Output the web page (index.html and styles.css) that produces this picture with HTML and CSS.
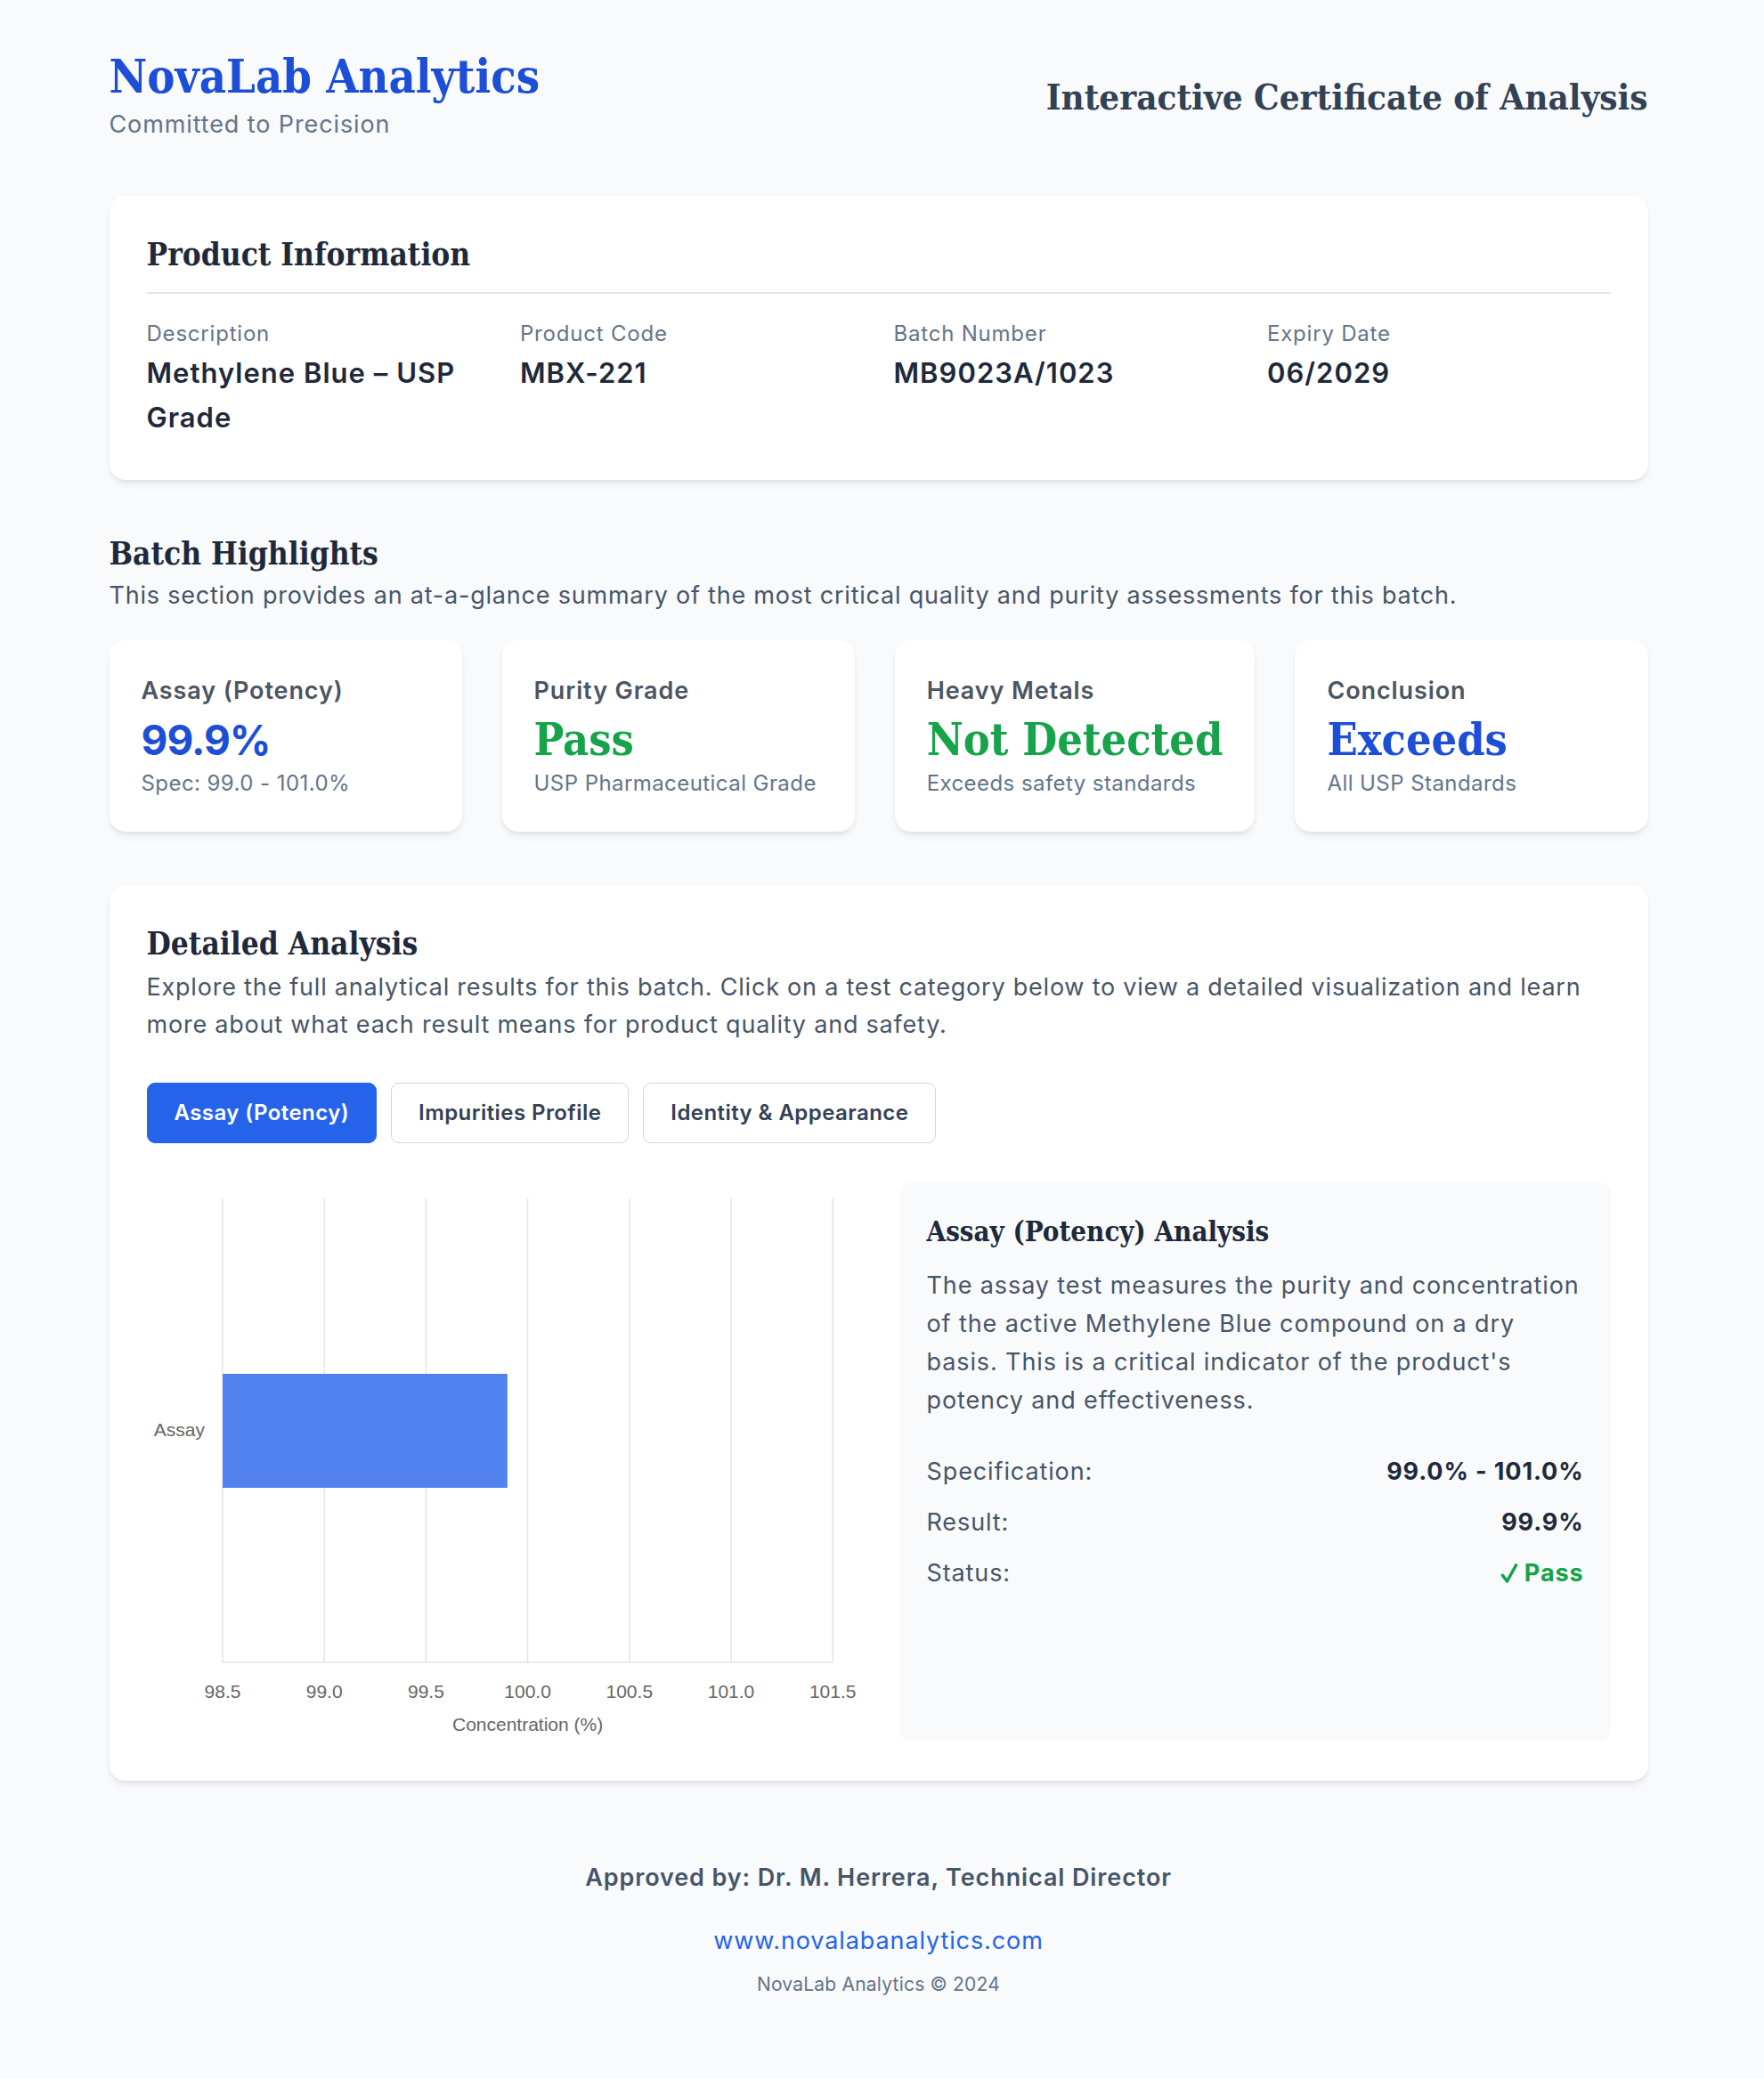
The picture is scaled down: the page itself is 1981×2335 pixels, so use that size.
FILE: index.html
```html
<!DOCTYPE html>
<html lang="en">
<head>
<meta charset="utf-8">
<title>NovaLab Analytics – Interactive Certificate of Analysis</title>
<link rel="stylesheet" href="styles.css">
</head>
<body>
<div class="page">
  <header class="top">
    <div class="brand">
      <div class="brand-name">NovaLab Analytics</div>
      <div class="brand-tag">Committed to Precision</div>
    </div>
    <h1 class="doc-title">Interactive Certificate of Analysis</h1>
  </header>

  <section class="card info">
    <h2 class="card-title bordered">Product Information</h2>
    <div class="info-grid">
      <div class="info-item">
        <div class="info-label">Description</div>
        <div class="info-value">Methylene Blue – USP Grade</div>
      </div>
      <div class="info-item">
        <div class="info-label">Product Code</div>
        <div class="info-value">MBX-221</div>
      </div>
      <div class="info-item">
        <div class="info-label">Batch Number</div>
        <div class="info-value">MB9023A/1023</div>
      </div>
      <div class="info-item">
        <div class="info-label">Expiry Date</div>
        <div class="info-value">06/2029</div>
      </div>
    </div>
  </section>

  <section class="highlights">
    <h2 class="section-title">Batch Highlights</h2>
    <p class="section-desc">This section provides an at-a-glance summary of the most critical quality and purity assessments for this batch.</p>
    <div class="hl-grid">
      <div class="hl-card">
        <div class="hl-label">Assay (Potency)</div>
        <div class="hl-value sans blue">99.9%</div>
        <div class="hl-sub">Spec: 99.0 - 101.0%</div>
      </div>
      <div class="hl-card">
        <div class="hl-label">Purity Grade</div>
        <div class="hl-value slab green">Pass</div>
        <div class="hl-sub">USP Pharmaceutical Grade</div>
      </div>
      <div class="hl-card">
        <div class="hl-label">Heavy Metals</div>
        <div class="hl-value slab green">Not Detected</div>
        <div class="hl-sub">Exceeds safety standards</div>
      </div>
      <div class="hl-card">
        <div class="hl-label">Conclusion</div>
        <div class="hl-value slab blue">Exceeds</div>
        <div class="hl-sub">All USP Standards</div>
      </div>
    </div>
  </section>

  <section class="card detail">
    <h2 class="card-title">Detailed Analysis</h2>
    <p class="detail-desc">Explore the full analytical results for this batch. Click on a test category below to view a detailed visualization and learn more about what each result means for product quality and safety.</p>
    <div class="tabs">
      <button class="tab active">Assay (Potency)</button>
      <button class="tab">Impurities Profile</button>
      <button class="tab">Identity &amp; Appearance</button>
    </div>
    <div class="detail-grid">
      <div class="chart">
        <svg class="chart-svg" width="798" height="627" viewBox="0 0 798 627">
          <g class="grid">
            <line x1="85" y1="18" x2="85" y2="539"/>
            <line x1="199.2" y1="18" x2="199.2" y2="539"/>
            <line x1="313.4" y1="18" x2="313.4" y2="539"/>
            <line x1="427.6" y1="18" x2="427.6" y2="539"/>
            <line x1="541.8" y1="18" x2="541.8" y2="539"/>
            <line x1="656" y1="18" x2="656" y2="539"/>
            <line x1="770.2" y1="18" x2="770.2" y2="539"/>
            <line x1="85" y1="539" x2="770.2" y2="539"/>
          </g>
          <rect class="bar" x="85" y="215" width="319.8" height="128"/>
          <g class="ticks">
            <text x="85" y="579">98.5</text>
            <text x="199.2" y="579">99.0</text>
            <text x="313.4" y="579">99.5</text>
            <text x="427.6" y="579">100.0</text>
            <text x="541.8" y="579">100.5</text>
            <text x="656" y="579">101.0</text>
            <text x="770.2" y="579">101.5</text>
          </g>
          <text class="ylabel" x="65" y="285">Assay</text>
          <text class="axis-title" x="427.6" y="616">Concentration (%)</text>
        </svg>
      </div>
      <div class="panel">
        <h3 class="panel-title">Assay (Potency) Analysis</h3>
        <p class="panel-text">The assay test measures the purity and concentration of the active Methylene Blue compound on a dry basis. This is a critical indicator of the product's potency and effectiveness.</p>
        <div class="rows">
          <div class="row"><span class="row-label">Specification:</span><span class="row-value">99.0% - 101.0%</span></div>
          <div class="row"><span class="row-label">Result:</span><span class="row-value">99.9%</span></div>
          <div class="row"><span class="row-label">Status:</span><span class="row-value pass"><svg class="check" width="20" height="24" viewBox="0 0 20 24"><path d="M2.5 14.5 L7.5 21 L17.5 3"/></svg>Pass</span></div>
        </div>
      </div>
    </div>
  </section>

  <footer class="foot">
    <div class="approved">Approved by: Dr. M. Herrera, Technical Director</div>
    <div class="site">www.novalabanalytics.com</div>
    <div class="copy">NovaLab Analytics © 2024</div>
  </footer>
</div>
</body>
</html>
```

FILE: styles.css
```css
html {
  background: #f8fafc;
}
body {
  margin: 0;
  padding-right: 8px;
  background: #f8fafc;
  font-family: Inter, "Noto Sans", "DejaVu Sans", sans-serif;
  color: #1e293b;
}
.page {
  max-width: 1728px;
  margin: 0 auto;
  padding: 56px 0 92px;
}
.slab,
.brand-name,
.doc-title,
.card-title,
.section-title,
.panel-title {
  font-family: "DejaVu Serif Condensed", "DejaVu Serif", serif;
  font-weight: 700;
  letter-spacing: normal;
}

/* wider tracking for the sans-serif text */
.brand-tag,
.info-label,
.info-value,
.hl-label,
.panel-text,
.row,
.approved,
.site {
  letter-spacing: 0.033em;
}
.section-desc,
.detail-desc {
  letter-spacing: 0.029em;
}

/* header */
.top {
  display: flex;
  justify-content: space-between;
  align-items: center;
  margin-bottom: 59px;
}
.brand-name {
  font-size: 52px;
  line-height: 60px;
  color: #1d4ed8;
}
.brand-tag {
  margin-top: 3px;
  font-size: 27px;
  line-height: 42px;
  color: #64748b;
}
.doc-title {
  margin: 0;
  font-size: 40px;
  line-height: 48px;
  color: #334155;
}

/* cards */
.card {
  background: #fff;
  border-radius: 18px;
  padding: 42px;
  box-shadow: 0 6px 9px -2px rgba(15, 23, 42, 0.08), 0 2px 6px -2px rgba(15, 23, 42, 0.08);
}
.card.info {
  padding-bottom: 45px;
}
.card-title {
  margin: 0;
  font-size: 35px;
  line-height: 48px;
  color: #1e293b;
}
.card-title.bordered {
  padding-bottom: 18px;
  border-bottom: 2px solid #e5e7eb;
  margin-bottom: 30px;
}
.info-grid {
  display: grid;
  grid-template-columns: repeat(4, 1fr);
  gap: 34px;
}
.info-label {
  font-size: 24px;
  line-height: 30px;
  color: #64748b;
}
.info-value {
  margin-top: 4px;
  font-size: 31px;
  line-height: 50px;
  font-weight: 600;
  color: #1e293b;
}

/* highlights */
.highlights {
  margin-top: 59px;
}
.section-title {
  margin: 0;
  font-size: 35px;
  line-height: 48px;
  color: #1e293b;
}
.section-desc {
  margin: 2px 0 0;
  font-size: 27px;
  line-height: 42px;
  color: #475569;
}
.hl-grid {
  margin-top: 29px;
  display: grid;
  grid-template-columns: repeat(4, 1fr);
  gap: 45px;
}
.hl-card {
  background: #fff;
  border-radius: 18px;
  padding: 36px 36px 39px;
  box-shadow: 0 6px 9px -2px rgba(15, 23, 42, 0.08), 0 2px 6px -2px rgba(15, 23, 42, 0.08);
}
.hl-label {
  font-size: 27px;
  line-height: 42px;
  font-weight: 600;
  color: #4b5563;
}
.hl-value {
  margin-top: 4px;
  font-size: 50px;
  line-height: 60px;
  font-weight: 700;
  white-space: nowrap;
}
.hl-value.sans {
  font-family: Inter, sans-serif;
  font-size: 46px;
  letter-spacing: -0.02em;
}
.blue { color: #1d4ed8; }
.green { color: #16a34a; }
.hl-sub {
  margin-top: 4px;
  font-size: 24px;
  line-height: 30px;
  letter-spacing: 0.018em;
  white-space: nowrap;
  color: #64748b;
}

/* detailed */
.detail {
  margin-top: 60px;
  padding-bottom: 45px;
}
.detail-desc {
  margin: 4px 0 0;
  font-size: 27px;
  line-height: 42px;
  color: #475569;
}
.tabs {
  margin-top: 44px;
  display: flex;
  gap: 16px;
}
.tab {
  font-family: Inter, sans-serif;
  font-size: 24px;
  line-height: 36px;
  font-weight: 600;
  letter-spacing: 0.018em;
  padding: 15px 30px;
  border: 1.5px solid #d1d5db;
  border-radius: 9px;
  background: #fff;
  color: #334155;
}
.tab.active {
  background: #2563eb;
  border-color: #2563eb;
  color: #fff;
}
.detail-grid {
  margin-top: 44px;
  display: grid;
  grid-template-columns: 1fr 1fr;
  gap: 48px;
}
.chart {
  height: 627px;
}
.chart-svg {
  display: block;
}
.grid line {
  stroke: #e5e5e5;
  stroke-width: 1.5;
}
.bar {
  fill: #5182ef;
}
.chart-svg text {
  font-family: "Liberation Sans", Arial, sans-serif;
  font-size: 21px;
  fill: #666;
}
.ticks text,
.axis-title {
  text-anchor: middle;
}
.ylabel {
  text-anchor: end;
}
.panel {
  background: #f8fafc;
  border-radius: 12px;
  padding: 34px 30px 30px;
}
.panel-title {
  margin: 0;
  font-size: 31px;
  line-height: 42px;
  color: #1e293b;
}
.panel-text {
  margin: 18px 0 0;
  font-size: 27px;
  line-height: 43px;
  color: #475569;
}
.rows {
  margin-top: 38px;
  display: flex;
  flex-direction: column;
  gap: 15px;
}
.row {
  display: flex;
  justify-content: space-between;
  font-size: 27px;
  line-height: 42px;
}
.row-label {
  color: #475569;
}
.row-value {
  font-weight: 700;
  color: #1e293b;
}
.row-value.pass {
  display: flex;
  align-items: center;
  gap: 7px;
  color: #16a34a;
}
.check {
  display: block;
  fill: none;
  stroke: #16a34a;
  stroke-width: 3.6;
  stroke-linecap: round;
  stroke-linejoin: round;
}

/* footer */
.foot {
  margin-top: 88px;
  text-align: center;
}
.approved {
  font-size: 27px;
  line-height: 42px;
  font-weight: 600;
  color: #475569;
}
.site {
  margin-top: 29px;
  font-size: 27px;
  line-height: 42px;
  color: #2563eb;
}
.copy {
  margin-top: 13px;
  font-size: 21px;
  line-height: 30px;
  letter-spacing: 0.01em;
  color: #64748b;
}
```
